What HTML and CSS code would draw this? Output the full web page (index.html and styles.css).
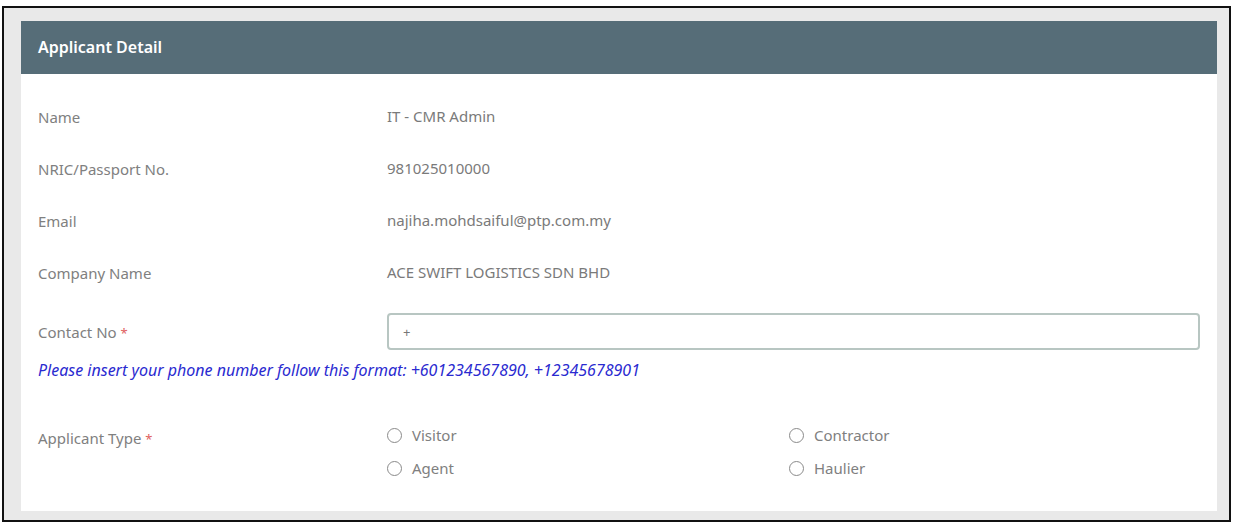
FILE: index.html
```html
<!DOCTYPE html>
<html lang="en">
<head>
    <meta charset="UTF-8">
    <title>Applicant Detail</title>
    <link rel="stylesheet" href="styles.css">
</head>
<body>
    <div class="frame">
        <div class="card">
            <div class="card-header">Applicant Detail</div>
            <div class="card-body">
                <div class="row">
                    <div class="label">Name</div>
                    <div class="value">IT - CMR Admin</div>
                </div>
                <div class="row">
                    <div class="label">NRIC/Passport No.</div>
                    <div class="value">981025010000</div>
                </div>
                <div class="row">
                    <div class="label">Email</div>
                    <div class="value">najiha.mohdsaiful@ptp.com.my</div>
                </div>
                <div class="row">
                    <div class="label">Company Name</div>
                    <div class="value">ACE SWIFT LOGISTICS SDN BHD</div>
                </div>
                <div class="row row-input">
                    <label class="label" for="contact">Contact No <span class="req">*</span></label>
                    <input type="text" id="contact" class="text-input" value="+">
                </div>
                <div class="hint">Please insert your phone number follow this format: +601234567890, +12345678901</div>
                <div class="row row-radio">
                    <div class="label">Applicant Type <span class="req">*</span></div>
                    <div class="radio-grid">
                        <label class="radio"><span class="circle"></span>Visitor</label>
                        <label class="radio"><span class="circle"></span>Contractor</label>
                        <label class="radio"><span class="circle"></span>Agent</label>
                        <label class="radio"><span class="circle"></span>Haulier</label>
                    </div>
                </div>
            </div>
        </div>
    </div>
</body>
</html>
```

FILE: styles.css
```css
* {
    box-sizing: border-box;
    margin: 0;
    padding: 0;
}
body {
    background: #ffffff;
    font-family: 'Noto Sans', 'Open Sans', Arial, sans-serif;
    font-size: 15px;
    color: #808080;
}
.frame {
    background: #e9e9e9;
    border: 2px solid #111111;
    height: 516px;
    margin: 6px 3px 0 2px;
    padding: 13px 12px 8px 17px;
}
.card {
    background: #ffffff;
    height: 490px;
}
.card-header {
    background: #566d78;
    color: #ffffff;
    font-size: 16px;
    font-weight: 600;
    height: 53px;
    line-height: 53px;
    padding-left: 17px;
}
.card-body {
    padding: 17px 17px 0 17px;
}
.row {
    display: grid;
    grid-template-columns: 349px 1fr;
    align-items: center;
    height: 52px;
}
.value {
    color: #7a7a7a;
    margin-top: -3px;
}
.req {
    color: #e06060;
    font-size: 13px;
}
.row-input {
    height: 37px;
    margin-top: 14px;
}
.text-input {
    border: 2px solid #b8c6c2;
    border-radius: 4px;
    color: #777777;
    font-family: inherit;
    font-size: 13px;
    height: 37px;
    outline: none;
    padding: 0 14px;
    width: 100%;
}
.hint {
    color: #2a2ad0;
    font-size: 16px;
    font-style: italic;
    line-height: 20px;
    margin-top: 10px;
}
.row-radio {
    align-items: start;
    height: auto;
    margin-top: 45px;
}
.row-radio .label {
    margin-top: 3px;
}
.radio-grid {
    display: grid;
    grid-template-columns: 402px 1fr;
    row-gap: 13px;
}
.radio {
    align-items: center;
    display: flex;
    gap: 10px;
    line-height: 20px;
}
.circle {
    border: 1.5px solid #8a8a8a;
    border-radius: 50%;
    height: 15px;
    width: 15px;
}
```
